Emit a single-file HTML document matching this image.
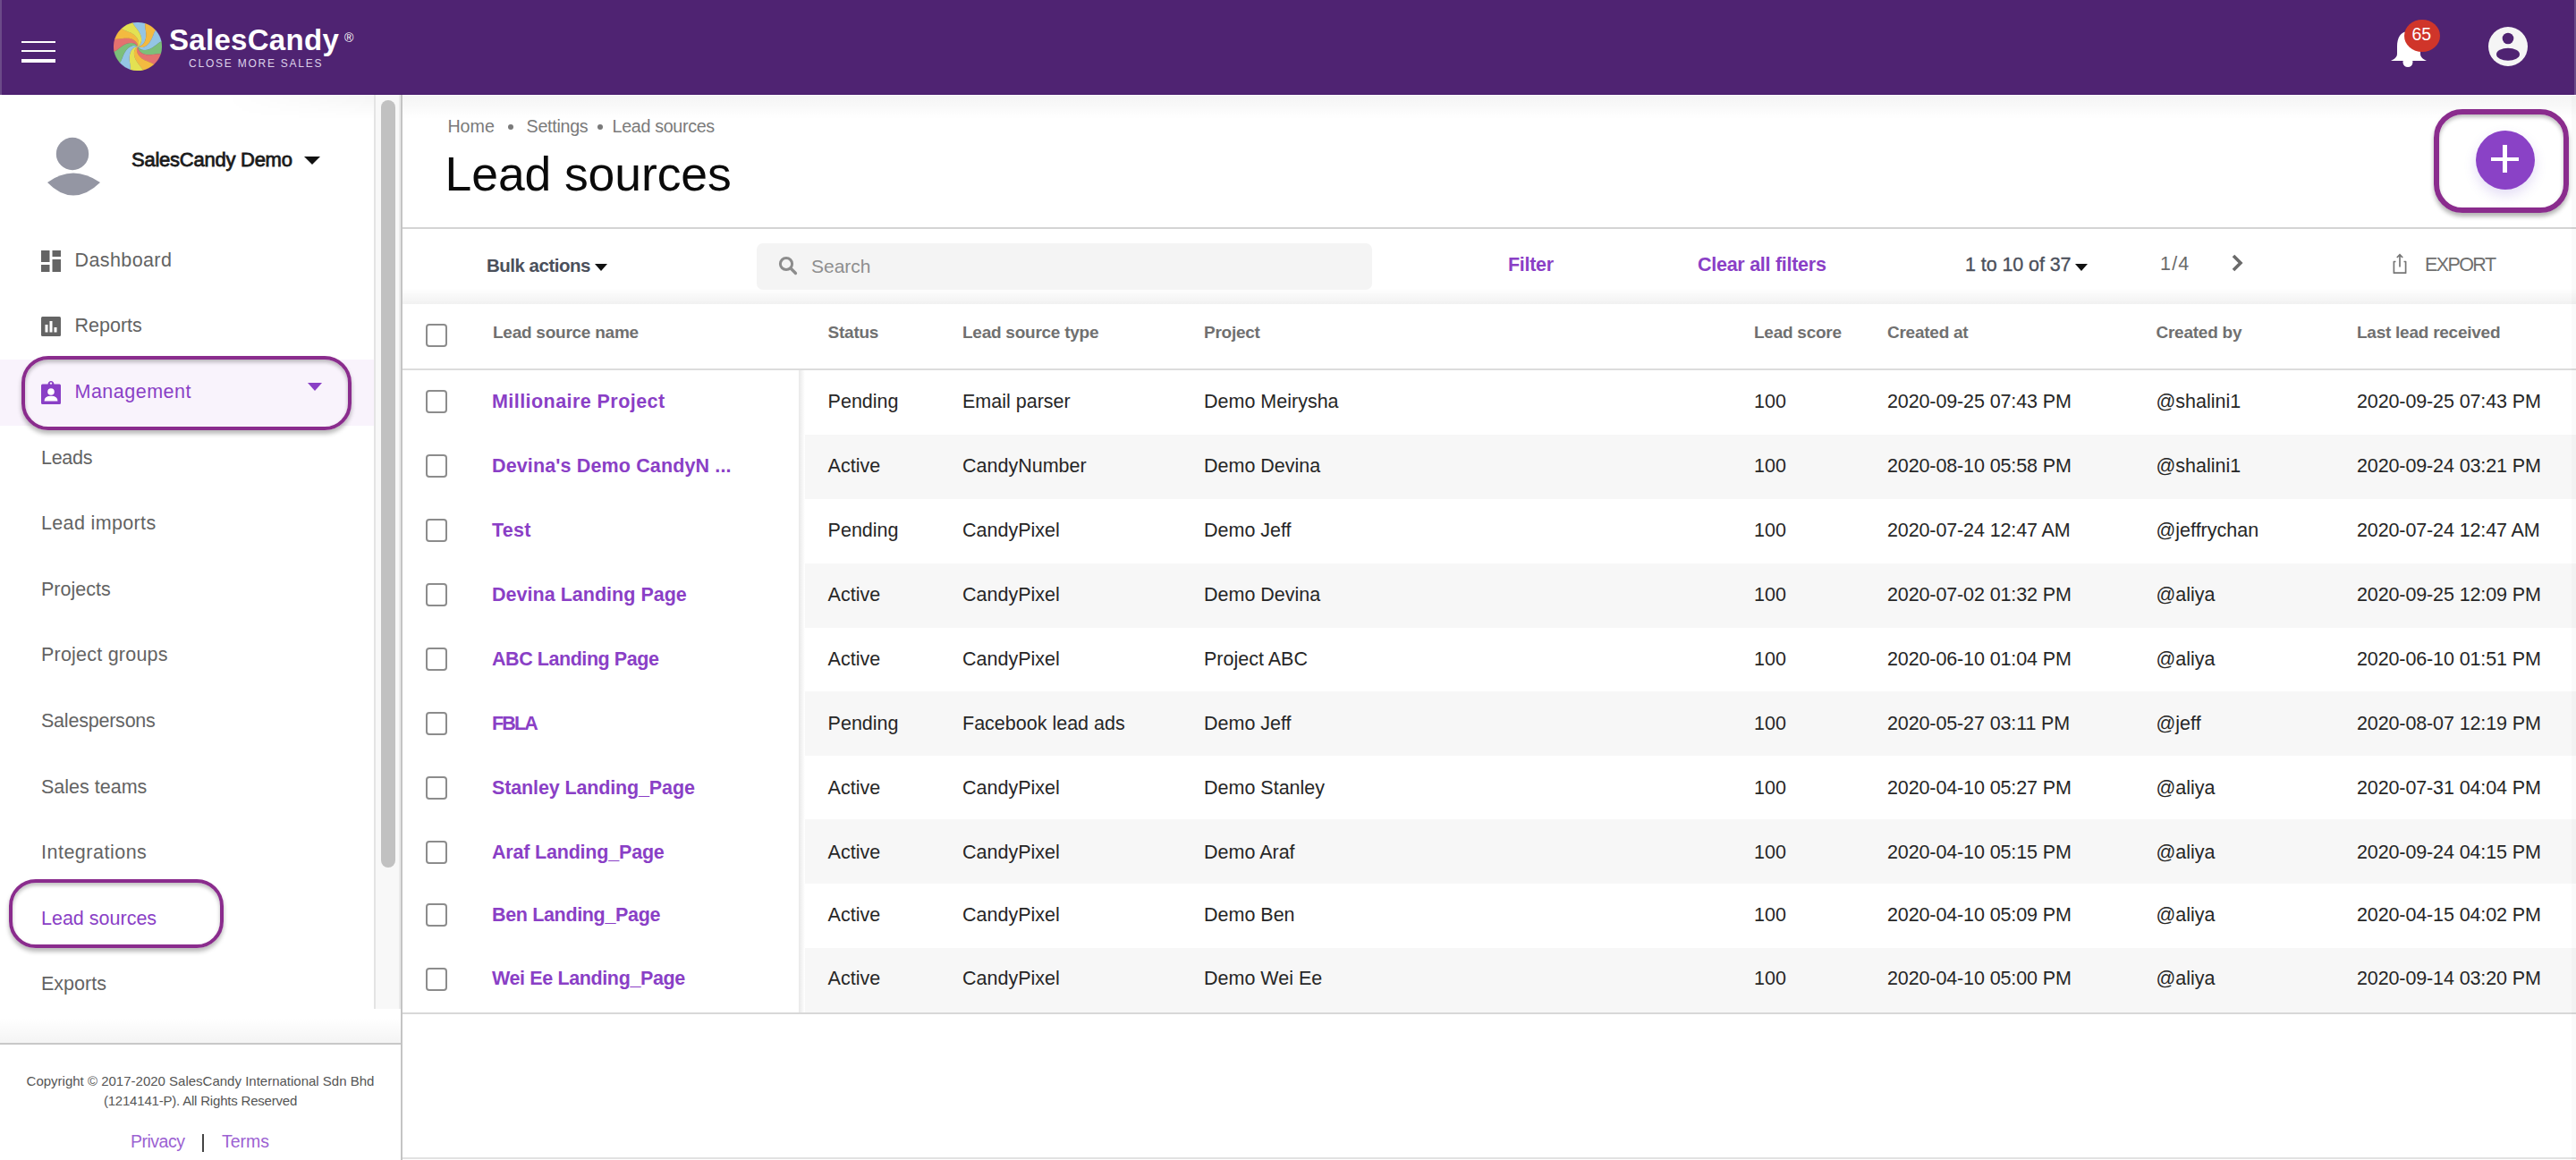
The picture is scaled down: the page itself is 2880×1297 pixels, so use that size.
<!DOCTYPE html>
<html><head><meta charset="utf-8"><style>
html,body{margin:0;padding:0;}
body{width:2880px;height:1297px;position:relative;overflow:hidden;background:#fff;font-family:"Liberation Sans", sans-serif;}
.t{position:absolute;white-space:nowrap;line-height:1;}
</style></head><body>
<div style="position:absolute;left:0;top:0;width:2880px;height:106px;background:#4F2372"></div>
<div style="position:absolute;left:0;top:105px;width:2880px;height:1px;background:#45176A"></div>
<div style="position:absolute;left:0;top:0;width:2px;height:106px;background:#6B4A88"></div>
<div style="position:absolute;left:2878px;top:0;width:2px;height:106px;background:#6B4A88"></div>
<div style="position:absolute;left:450px;top:107px;width:2430px;height:26px;background:linear-gradient(to bottom,rgba(0,0,0,0.045),rgba(0,0,0,0))"></div>
<div style="position:absolute;left:250px;top:107px;width:168px;height:26px;background:linear-gradient(to bottom,rgba(0,0,0,0.04),rgba(0,0,0,0));-webkit-mask-image:linear-gradient(to right,transparent,#000)"></div>
<div style="position:absolute;left:24px;top:46px;width:38px;height:2px;background:#fff"></div>
<div style="position:absolute;left:24px;top:56px;width:38px;height:2px;background:#fff"></div>
<div style="position:absolute;left:24px;top:66px;width:38px;height:4px;background:#fff"></div>
<svg style="position:absolute;left:126.80000000000001px;top:25px" width="54" height="54" viewBox="-27 -27 54 54"><path d="M0.00,-0.00 L1.57,-1.12 L2.80,-2.65 L3.64,-4.50 L4.06,-6.56 L4.07,-8.74 L3.70,-10.96 L2.98,-13.17 L1.97,-15.30 L0.74,-17.34 L-0.64,-19.28 L-2.08,-21.11 L-3.49,-22.88 L-4.74,-24.62 L-5.61,-26.41 A27,27 0 0 1 8.34,-25.68 L8.20,-23.69 L8.42,-21.56 L8.76,-19.32 L9.09,-17.01 L9.31,-14.65 L9.36,-12.27 L9.16,-9.91 L8.68,-7.65 L7.90,-5.53 L6.80,-3.65 L5.40,-2.07 L3.75,-0.89 L1.92,-0.18 L0.00,0.00 Z" fill="#94C5E5" stroke="#94C5E5" stroke-width="0.3"/><path d="M0.00,0.00 L1.92,-0.18 L3.75,-0.89 L5.40,-2.07 L6.80,-3.65 L7.90,-5.53 L8.68,-7.65 L9.16,-9.91 L9.36,-12.27 L9.31,-14.65 L9.09,-17.01 L8.76,-19.32 L8.42,-21.56 L8.20,-23.69 L8.34,-25.68 A27,27 0 0 1 20.06,-18.07 L18.95,-16.42 L18.07,-14.46 L17.24,-12.36 L16.37,-10.19 L15.39,-8.03 L14.24,-5.95 L12.89,-4.01 L11.34,-2.28 L9.61,-0.84 L7.71,0.24 L5.71,0.90 L3.70,1.10 L1.75,0.80 L0.00,0.00 Z" fill="#F3BA40" stroke="#F3BA40" stroke-width="0.3"/><path d="M0.00,0.00 L1.75,0.80 L3.70,1.10 L5.71,0.90 L7.71,0.24 L9.61,-0.84 L11.34,-2.28 L12.89,-4.01 L14.24,-5.95 L15.39,-8.03 L16.37,-10.19 L17.24,-12.36 L18.07,-14.46 L18.95,-16.42 L20.06,-18.07 A27,27 0 0 1 26.41,-5.61 L24.62,-4.74 L22.88,-3.49 L21.11,-2.08 L19.28,-0.64 L17.34,0.74 L15.30,1.97 L13.17,2.98 L10.96,3.70 L8.74,4.07 L6.56,4.06 L4.50,3.64 L2.65,2.80 L1.12,1.57 L0.00,0.00 Z" fill="#94C5E5" stroke="#94C5E5" stroke-width="0.3"/><path d="M0.00,0.00 L1.12,1.57 L2.65,2.80 L4.50,3.64 L6.56,4.06 L8.74,4.07 L10.96,3.70 L13.17,2.98 L15.30,1.97 L17.34,0.74 L19.28,-0.64 L21.11,-2.08 L22.88,-3.49 L24.62,-4.74 L26.41,-5.61 A27,27 0 0 1 25.68,8.34 L23.69,8.20 L21.56,8.42 L19.32,8.76 L17.01,9.09 L14.65,9.31 L12.27,9.36 L9.91,9.16 L7.65,8.68 L5.53,7.90 L3.65,6.80 L2.07,5.40 L0.89,3.75 L0.18,1.92 L-0.00,0.00 Z" fill="#7CBF79" stroke="#7CBF79" stroke-width="0.3"/><path d="M-0.00,0.00 L0.18,1.92 L0.89,3.75 L2.07,5.40 L3.65,6.80 L5.53,7.90 L7.65,8.68 L9.91,9.16 L12.27,9.36 L14.65,9.31 L17.01,9.09 L19.32,8.76 L21.56,8.42 L23.69,8.20 L25.68,8.34 A27,27 0 0 1 18.07,20.06 L16.42,18.95 L14.46,18.07 L12.36,17.24 L10.19,16.37 L8.03,15.39 L5.95,14.24 L4.01,12.89 L2.28,11.34 L0.84,9.61 L-0.24,7.71 L-0.90,5.71 L-1.10,3.70 L-0.80,1.75 L-0.00,0.00 Z" fill="#E3726F" stroke="#E3726F" stroke-width="0.3"/><path d="M-0.00,0.00 L-0.80,1.75 L-1.10,3.70 L-0.90,5.71 L-0.24,7.71 L0.84,9.61 L2.28,11.34 L4.01,12.89 L5.95,14.24 L8.03,15.39 L10.19,16.37 L12.36,17.24 L14.46,18.07 L16.42,18.95 L18.07,20.06 A27,27 0 0 1 5.61,26.41 L4.74,24.62 L3.49,22.88 L2.08,21.11 L0.64,19.28 L-0.74,17.34 L-1.97,15.30 L-2.98,13.17 L-3.70,10.96 L-4.07,8.74 L-4.06,6.56 L-3.64,4.50 L-2.80,2.65 L-1.57,1.12 L-0.00,0.00 Z" fill="#F3BA40" stroke="#F3BA40" stroke-width="0.3"/><path d="M-0.00,0.00 L-1.57,1.12 L-2.80,2.65 L-3.64,4.50 L-4.06,6.56 L-4.07,8.74 L-3.70,10.96 L-2.98,13.17 L-1.97,15.30 L-0.74,17.34 L0.64,19.28 L2.08,21.11 L3.49,22.88 L4.74,24.62 L5.61,26.41 A27,27 0 0 1 -8.34,25.68 L-8.20,23.69 L-8.42,21.56 L-8.76,19.32 L-9.09,17.01 L-9.31,14.65 L-9.36,12.27 L-9.16,9.91 L-8.68,7.65 L-7.90,5.53 L-6.80,3.65 L-5.40,2.07 L-3.75,0.89 L-1.92,0.18 L-0.00,-0.00 Z" fill="#E3E152" stroke="#E3E152" stroke-width="0.3"/><path d="M-0.00,-0.00 L-1.92,0.18 L-3.75,0.89 L-5.40,2.07 L-6.80,3.65 L-7.90,5.53 L-8.68,7.65 L-9.16,9.91 L-9.36,12.27 L-9.31,14.65 L-9.09,17.01 L-8.76,19.32 L-8.42,21.56 L-8.20,23.69 L-8.34,25.68 A27,27 0 0 1 -20.06,18.07 L-18.95,16.42 L-18.07,14.46 L-17.24,12.36 L-16.37,10.19 L-15.39,8.03 L-14.24,5.95 L-12.89,4.01 L-11.34,2.28 L-9.61,0.84 L-7.71,-0.24 L-5.71,-0.90 L-3.70,-1.10 L-1.75,-0.80 L-0.00,-0.00 Z" fill="#94C5E5" stroke="#94C5E5" stroke-width="0.3"/><path d="M-0.00,-0.00 L-1.75,-0.80 L-3.70,-1.10 L-5.71,-0.90 L-7.71,-0.24 L-9.61,0.84 L-11.34,2.28 L-12.89,4.01 L-14.24,5.95 L-15.39,8.03 L-16.37,10.19 L-17.24,12.36 L-18.07,14.46 L-18.95,16.42 L-20.06,18.07 A27,27 0 0 1 -26.41,5.61 L-24.62,4.74 L-22.88,3.49 L-21.11,2.08 L-19.28,0.64 L-17.34,-0.74 L-15.30,-1.97 L-13.17,-2.98 L-10.96,-3.70 L-8.74,-4.07 L-6.56,-4.06 L-4.50,-3.64 L-2.65,-2.80 L-1.12,-1.57 L-0.00,-0.00 Z" fill="#7CBF79" stroke="#7CBF79" stroke-width="0.3"/><path d="M-0.00,-0.00 L-1.12,-1.57 L-2.65,-2.80 L-4.50,-3.64 L-6.56,-4.06 L-8.74,-4.07 L-10.96,-3.70 L-13.17,-2.98 L-15.30,-1.97 L-17.34,-0.74 L-19.28,0.64 L-21.11,2.08 L-22.88,3.49 L-24.62,4.74 L-26.41,5.61 A27,27 0 0 1 -25.68,-8.34 L-23.69,-8.20 L-21.56,-8.42 L-19.32,-8.76 L-17.01,-9.09 L-14.65,-9.31 L-12.27,-9.36 L-9.91,-9.16 L-7.65,-8.68 L-5.53,-7.90 L-3.65,-6.80 L-2.07,-5.40 L-0.89,-3.75 L-0.18,-1.92 L0.00,-0.00 Z" fill="#E3726F" stroke="#E3726F" stroke-width="0.3"/><path d="M0.00,-0.00 L-0.18,-1.92 L-0.89,-3.75 L-2.07,-5.40 L-3.65,-6.80 L-5.53,-7.90 L-7.65,-8.68 L-9.91,-9.16 L-12.27,-9.36 L-14.65,-9.31 L-17.01,-9.09 L-19.32,-8.76 L-21.56,-8.42 L-23.69,-8.20 L-25.68,-8.34 A27,27 0 0 1 -18.07,-20.06 L-16.42,-18.95 L-14.46,-18.07 L-12.36,-17.24 L-10.19,-16.37 L-8.03,-15.39 L-5.95,-14.24 L-4.01,-12.89 L-2.28,-11.34 L-0.84,-9.61 L0.24,-7.71 L0.90,-5.71 L1.10,-3.70 L0.80,-1.75 L0.00,-0.00 Z" fill="#F3BA40" stroke="#F3BA40" stroke-width="0.3"/><path d="M0.00,-0.00 L0.80,-1.75 L1.10,-3.70 L0.90,-5.71 L0.24,-7.71 L-0.84,-9.61 L-2.28,-11.34 L-4.01,-12.89 L-5.95,-14.24 L-8.03,-15.39 L-10.19,-16.37 L-12.36,-17.24 L-14.46,-18.07 L-16.42,-18.95 L-18.07,-20.06 A27,27 0 0 1 -5.61,-26.41 L-4.74,-24.62 L-3.49,-22.88 L-2.08,-21.11 L-0.64,-19.28 L0.74,-17.34 L1.97,-15.30 L2.98,-13.17 L3.70,-10.96 L4.07,-8.74 L4.06,-6.56 L3.64,-4.50 L2.80,-2.65 L1.57,-1.12 L0.00,-0.00 Z" fill="#E3E152" stroke="#E3E152" stroke-width="0.3"/></svg>
<div class="t " style="left:189px;top:27.95px;font-size:33px;color:#fff;font-weight:bold;letter-spacing:0.3px;">SalesCandy</div>
<div class="t " style="left:385px;top:34.60px;font-size:14px;color:#fff;font-weight:normal;letter-spacing:0px;">&#174;</div>
<div class="t " style="left:211px;top:64.80px;font-size:12px;color:#DDD2EA;font-weight:normal;letter-spacing:1.77px;">CLOSE MORE SALES</div>
<svg style="position:absolute;left:2670px;top:30px" width="46" height="48" viewBox="0 0 46 48">
<path d="M23 5 C14 5 10 12 10 22 L10 30 C10 34 7 36 3 38 L43 38 C39 36 36 34 36 30 L36 22 C36 12 32 5 23 5 Z" fill="#fff"/>
<circle cx="22" cy="39.5" r="5.5" fill="#fff"/>
</svg>
<div style="position:absolute;left:2688px;top:22px;width:40px;height:36px;border-radius:50%;background:#D0352A"></div>
<div class="t " style="left:2696.5px;top:29.43px;font-size:19.5px;color:#fff;font-weight:normal;letter-spacing:0px;">65</div>
<svg style="position:absolute;left:2782px;top:30px" width="44" height="44" viewBox="0 0 44 44">
<circle cx="22" cy="22" r="22" fill="#F5F5F5"/>
<circle cx="22" cy="13" r="6.3" fill="#4F2372"/>
<ellipse cx="22" cy="30.8" rx="13" ry="7" fill="#4F2372"/>
</svg>
<div style="position:absolute;left:0;top:402px;width:418px;height:74px;background:#F9F3FC"></div>
<div style="position:absolute;left:418px;top:106px;width:2px;height:1022px;background:#E4E4E4"></div>
<div style="position:absolute;left:420px;top:106px;width:26px;height:1022px;background:#F8F8F8"></div>
<div style="position:absolute;left:446px;top:106px;width:2px;height:1022px;background:#EAEAEA"></div>
<div style="position:absolute;left:426px;top:112px;width:16px;height:858px;background:#C1C1C1;border-radius:8px"></div>
<div style="position:absolute;left:448px;top:106px;width:2px;height:1191px;background:#C4C4C4"></div>
<svg style="position:absolute;left:52px;top:153px" width="62" height="67" viewBox="0 0 62 67">
<circle cx="29" cy="19" r="18.2" fill="#9496A3"/>
<path d="M1 51 Q29.5 30 60 51 Q45 65.5 30 65.5 Q15 65.5 1 51 Z" fill="#9496A3"/>
</svg>
<div class="t " style="left:147px;top:167.80px;font-size:22px;color:#1B1B1B;font-weight:normal;letter-spacing:-0.25px;-webkit-text-stroke:0.8px #1B1B1B;">SalesCandy Demo</div>
<div style="position:absolute;left:340px;top:175px;width:0;height:0;border-left:9.5px solid transparent;border-right:9.5px solid transparent;border-top:9.5px solid #111"></div>
<svg style="position:absolute;left:46px;top:280px" width="22" height="24" viewBox="0 0 22 24" fill="#646464">
<rect x="0" y="0" width="9.5" height="13"/><rect x="12.5" y="0" width="9.5" height="7"/><rect x="0" y="16" width="9.5" height="8"/><rect x="12.5" y="10" width="9.5" height="14"/></svg>
<svg style="position:absolute;left:46px;top:354px" width="22" height="22" viewBox="0 0 22 22">
<rect width="22" height="22" rx="1.5" fill="#646464"/><rect x="4.5" y="9" width="3" height="8.5" fill="#fff"/><rect x="9.5" y="5" width="3" height="12.5" fill="#fff"/><rect x="14.5" y="12" width="3" height="5.5" fill="#fff"/></svg>
<svg style="position:absolute;left:46px;top:426px" width="22" height="26" viewBox="0 0 22 26">
<path d="M1.5 3.5 H7.5 Q8 0 11 0 Q14 0 14.5 3.5 H20.5 Q22 3.5 22 5 V24.5 Q22 26 20.5 26 H1.5 Q0 26 0 24.5 V5 Q0 3.5 1.5 3.5 Z" fill="#8A3FC6"/>
<circle cx="11" cy="2.6" r="1.2" fill="#F8F3FB"/>
<circle cx="11" cy="12" r="3.8" fill="#fff"/>
<path d="M3.5 22.5 Q3.5 16.8 11 16.8 Q18.5 16.8 18.5 22.5 Z" fill="#fff"/></svg>
<div class="t nav" style="left:83.5px;top:280.83px;font-size:21.5px;color:#636363;font-weight:normal;letter-spacing:0.4px;">Dashboard</div>
<div class="t nav" style="left:83.5px;top:354.43px;font-size:21.5px;color:#636363;font-weight:normal;letter-spacing:0px;">Reports</div>
<div class="t nav" style="left:83.5px;top:428.03px;font-size:21.5px;color:#8A3FC6;font-weight:normal;letter-spacing:0.5px;">Management</div>
<div class="t nav" style="left:46px;top:501.62px;font-size:21.5px;color:#636363;font-weight:normal;letter-spacing:-0.3px;">Leads</div>
<div class="t nav" style="left:46px;top:575.23px;font-size:21.5px;color:#636363;font-weight:normal;letter-spacing:0.35px;">Lead imports</div>
<div class="t nav" style="left:46px;top:648.83px;font-size:21.5px;color:#636363;font-weight:normal;letter-spacing:0px;">Projects</div>
<div class="t nav" style="left:46px;top:722.43px;font-size:21.5px;color:#636363;font-weight:normal;letter-spacing:0.22px;">Project groups</div>
<div class="t nav" style="left:46px;top:796.02px;font-size:21.5px;color:#636363;font-weight:normal;letter-spacing:-0.22px;">Salespersons</div>
<div class="t nav" style="left:46px;top:869.62px;font-size:21.5px;color:#636363;font-weight:normal;letter-spacing:0px;">Sales teams</div>
<div class="t nav" style="left:46px;top:943.23px;font-size:21.5px;color:#636363;font-weight:normal;letter-spacing:0.5px;">Integrations</div>
<div class="t nav" style="left:46px;top:1016.82px;font-size:21.5px;color:#8A3FC6;font-weight:normal;letter-spacing:0px;">Lead sources</div>
<div class="t nav" style="left:46px;top:1090.42px;font-size:21.5px;color:#636363;font-weight:normal;letter-spacing:0px;">Exports</div>
<div style="position:absolute;left:344px;top:428px;width:0;height:0;border-left:8px solid transparent;border-right:8px solid transparent;border-top:9px solid #8A3FC6"></div>
<div style="position:absolute;left:23.5px;top:398px;width:369px;height:83px;box-sizing:border-box;border:4.8px solid #8A2C8D;border-radius:30px;box-shadow:0 4px 5px rgba(0,0,0,0.28), inset 0 3px 4px rgba(0,0,0,0.25)"></div>
<div style="position:absolute;left:9.5px;top:982.5px;width:240.5px;height:77.5px;box-sizing:border-box;border:4.5px solid #8A2C8D;border-radius:30px;box-shadow:0 4px 5px rgba(0,0,0,0.28), inset 0 3px 4px rgba(0,0,0,0.25)"></div>
<div style="position:absolute;left:0;top:1138px;width:448px;height:28px;background:linear-gradient(to bottom,rgba(0,0,0,0),rgba(0,0,0,0.045))"></div>
<div style="position:absolute;left:0;top:1165.5px;width:448px;height:2px;background:#C8C8C8"></div>
<div class="t" style="left:0;width:448px;text-align:center;top:1200.58px;font-size:15px;color:#555">Copyright &#169; 2017-2020 SalesCandy International Sdn Bhd</div>
<div class="t" style="left:0;width:448px;text-align:center;top:1222.83px;font-size:15px;letter-spacing:-0.2px;color:#555">(1214141-P). All Rights Reserved</div>
<div class="t " style="left:146px;top:1267.33px;font-size:19.5px;color:#9C62D2;font-weight:normal;letter-spacing:-0.5px;">Privacy</div>
<div style="position:absolute;left:226px;top:1268px;width:2px;height:20px;background:#444"></div>
<div class="t " style="left:248px;top:1267.33px;font-size:19.5px;color:#9C62D2;font-weight:normal;letter-spacing:0px;">Terms</div>
<div class="t " style="left:500.4px;top:131.66px;font-size:19.7px;color:#7A7A7A;font-weight:normal;letter-spacing:0px;">Home</div>
<div style="position:absolute;left:568px;top:139px;width:6px;height:6px;border-radius:50%;background:#7A7A7A"></div>
<div class="t " style="left:588.6px;top:131.66px;font-size:19.7px;color:#7A7A7A;font-weight:normal;letter-spacing:-0.3px;">Settings</div>
<div style="position:absolute;left:668px;top:139px;width:6px;height:6px;border-radius:50%;background:#7A7A7A"></div>
<div class="t " style="left:684.6px;top:131.66px;font-size:19.7px;color:#7A7A7A;font-weight:normal;letter-spacing:-0.33px;">Lead sources</div>
<div class="t " style="left:497.6px;top:168.22px;font-size:53.5px;color:#0A0A0A;font-weight:normal;letter-spacing:-0.1px;">Lead sources</div>
<div style="position:absolute;left:2721px;top:122px;width:151px;height:115.5px;box-sizing:border-box;border:6px solid #8A2C8D;border-radius:32px;box-shadow:0 4px 5px rgba(0,0,0,0.3), inset 0 3px 4px rgba(0,0,0,0.25)"></div>
<div style="position:absolute;left:2768px;top:146px;width:66px;height:66px;border-radius:50%;background:#8A42C6;box-shadow:0 6px 14px rgba(100,60,200,0.18)"></div>
<div style="position:absolute;left:2785px;top:175.5px;width:31px;height:4.7px;background:#fff"></div>
<div style="position:absolute;left:2798.3px;top:161.5px;width:4.7px;height:31.5px;background:#fff"></div>
<div style="position:absolute;left:450px;top:253.5px;width:2430px;height:2px;background:#D4D4D4"></div>
<div style="position:absolute;left:450px;top:322px;width:2430px;height:18px;background:linear-gradient(to bottom,rgba(0,0,0,0),rgba(0,0,0,0.055))"></div>
<div class="t " style="left:544px;top:286.88px;font-size:20.5px;color:#4B505B;font-weight:bold;letter-spacing:-0.5px;">Bulk actions</div>
<div style="position:absolute;left:664.5px;top:295px;width:0;height:0;border-left:7.2px solid transparent;border-right:7.2px solid transparent;border-top:8.5px solid #111"></div>
<div style="position:absolute;left:846px;top:272px;width:688px;height:52px;border-radius:7px;background:#F4F4F4"></div>
<svg style="position:absolute;left:869px;top:285px" width="24" height="24" viewBox="0 0 24 24">
<circle cx="10" cy="10" r="6.6" fill="none" stroke="#8C8C8C" stroke-width="3"/>
<path d="M15 15 L20.5 20.5" stroke="#8C8C8C" stroke-width="3.2" stroke-linecap="round"/></svg>
<div class="t " style="left:907px;top:286.65px;font-size:21px;color:#8E8E8E;font-weight:normal;letter-spacing:0px;">Search</div>
<div class="t " style="left:1686px;top:286.03px;font-size:21.5px;color:#8A3FC6;font-weight:bold;letter-spacing:-0.3px;">Filter</div>
<div class="t " style="left:1898px;top:286.03px;font-size:21.5px;color:#8A3FC6;font-weight:bold;letter-spacing:-0.27px;">Clear all filters</div>
<div class="t " style="left:2197px;top:286.03px;font-size:21.5px;color:#4B505B;font-weight:normal;letter-spacing:-0.08px;-webkit-text-stroke:0.35px #4B505B;">1 to 10 of 37</div>
<div style="position:absolute;left:2320px;top:295px;width:0;height:0;border-left:7.5px solid transparent;border-right:7.5px solid transparent;border-top:8.5px solid #111"></div>
<div class="t " style="left:2415px;top:284.62px;font-size:21.5px;color:#6A6A6A;font-weight:normal;letter-spacing:1.2px;">1/4</div>
<svg style="position:absolute;left:2492px;top:282px" width="20" height="24" viewBox="0 0 20 24">
<path d="M5 4 L13 12 L5 20" fill="none" stroke="#6A6A6A" stroke-width="3.6"/></svg>
<svg style="position:absolute;left:2670px;top:282px" width="24" height="26" viewBox="0 0 24 26">
<path d="M8.5 10.5 H6.4 V23.2 H19.6 V10.5 H17.5" fill="none" stroke="#767676" stroke-width="1.7" stroke-linejoin="round"/>
<path d="M13 2.8 V16.5 M9.8 6 L13 2.8 L16.2 6" fill="none" stroke="#767676" stroke-width="1.7"/></svg>
<div class="t " style="left:2711px;top:286.03px;font-size:21.5px;color:#707070;font-weight:normal;letter-spacing:-1.6px;">EXPORT</div>
<div style="position:absolute;left:476px;top:362px;width:24px;height:26px;box-sizing:border-box;border:2px solid #8C8C8C;border-radius:4px;background:#fff"></div>
<div class="t " style="left:551px;top:362.35px;font-size:19px;color:#707070;font-weight:bold;letter-spacing:-0.25px;">Lead source name</div>
<div class="t " style="left:925.6px;top:362.35px;font-size:19px;color:#707070;font-weight:bold;letter-spacing:-0.25px;">Status</div>
<div class="t " style="left:1076px;top:362.35px;font-size:19px;color:#707070;font-weight:bold;letter-spacing:-0.25px;">Lead source type</div>
<div class="t " style="left:1346px;top:362.35px;font-size:19px;color:#707070;font-weight:bold;letter-spacing:-0.25px;">Project</div>
<div class="t " style="left:1961px;top:362.35px;font-size:19px;color:#707070;font-weight:bold;letter-spacing:-0.25px;">Lead score</div>
<div class="t " style="left:2110px;top:362.35px;font-size:19px;color:#707070;font-weight:bold;letter-spacing:-0.25px;">Created at</div>
<div class="t " style="left:2410.5px;top:362.35px;font-size:19px;color:#707070;font-weight:bold;letter-spacing:-0.25px;">Created by</div>
<div class="t " style="left:2635px;top:362.35px;font-size:19px;color:#707070;font-weight:bold;letter-spacing:-0.25px;">Last lead received</div>
<div style="position:absolute;left:450px;top:412px;width:2430px;height:2px;background:#DCDCDC"></div>
<div style="position:absolute;left:900px;top:486px;width:1980px;height:72px;background:#F7F7F7"></div>
<div style="position:absolute;left:900px;top:630px;width:1980px;height:71.5px;background:#F7F7F7"></div>
<div style="position:absolute;left:900px;top:772.5px;width:1980px;height:72.0px;background:#F7F7F7"></div>
<div style="position:absolute;left:900px;top:916px;width:1980px;height:72px;background:#F7F7F7"></div>
<div style="position:absolute;left:900px;top:1060px;width:1980px;height:72px;background:#F7F7F7"></div>
<div style="position:absolute;left:476px;top:436px;width:24px;height:26px;box-sizing:border-box;border:2px solid #8C8C8C;border-radius:4px;background:#fff"></div>
<div class="t " style="left:550px;top:439.23px;font-size:21.5px;color:#8A3FC6;font-weight:bold;letter-spacing:0.439px;">Millionaire Project</div>
<div class="t " style="left:925.6px;top:439.23px;font-size:21.5px;color:#262626;font-weight:normal;letter-spacing:0px;">Pending</div>
<div class="t " style="left:1076px;top:439.23px;font-size:21.5px;color:#262626;font-weight:normal;letter-spacing:0px;">Email parser</div>
<div class="t " style="left:1346px;top:439.23px;font-size:21.5px;color:#262626;font-weight:normal;letter-spacing:0px;">Demo Meirysha</div>
<div class="t " style="left:1961px;top:439.23px;font-size:21.5px;color:#262626;font-weight:normal;letter-spacing:0px;">100</div>
<div class="t " style="left:2110px;top:439.23px;font-size:21.5px;color:#262626;font-weight:normal;letter-spacing:-0.12px;">2020-09-25 07:43 PM</div>
<div class="t " style="left:2410.5px;top:439.23px;font-size:21.5px;color:#262626;font-weight:normal;letter-spacing:0px;">@shalini1</div>
<div class="t " style="left:2635px;top:439.23px;font-size:21.5px;color:#262626;font-weight:normal;letter-spacing:-0.12px;">2020-09-25 07:43 PM</div>
<div style="position:absolute;left:476px;top:508px;width:24px;height:26px;box-sizing:border-box;border:2px solid #8C8C8C;border-radius:4px;background:#fff"></div>
<div class="t " style="left:550px;top:511.33px;font-size:21.5px;color:#8A3FC6;font-weight:bold;letter-spacing:0.137px;">Devina's Demo CandyN ...</div>
<div class="t " style="left:925.6px;top:511.33px;font-size:21.5px;color:#262626;font-weight:normal;letter-spacing:0px;">Active</div>
<div class="t " style="left:1076px;top:511.33px;font-size:21.5px;color:#262626;font-weight:normal;letter-spacing:0px;">CandyNumber</div>
<div class="t " style="left:1346px;top:511.33px;font-size:21.5px;color:#262626;font-weight:normal;letter-spacing:0px;">Demo Devina</div>
<div class="t " style="left:1961px;top:511.33px;font-size:21.5px;color:#262626;font-weight:normal;letter-spacing:0px;">100</div>
<div class="t " style="left:2110px;top:511.33px;font-size:21.5px;color:#262626;font-weight:normal;letter-spacing:-0.12px;">2020-08-10 05:58 PM</div>
<div class="t " style="left:2410.5px;top:511.33px;font-size:21.5px;color:#262626;font-weight:normal;letter-spacing:0px;">@shalini1</div>
<div class="t " style="left:2635px;top:511.33px;font-size:21.5px;color:#262626;font-weight:normal;letter-spacing:-0.12px;">2020-09-24 03:21 PM</div>
<div style="position:absolute;left:476px;top:580px;width:24px;height:26px;box-sizing:border-box;border:2px solid #8C8C8C;border-radius:4px;background:#fff"></div>
<div class="t " style="left:550px;top:582.93px;font-size:21.5px;color:#8A3FC6;font-weight:bold;letter-spacing:0.25px;">Test</div>
<div class="t " style="left:925.6px;top:582.93px;font-size:21.5px;color:#262626;font-weight:normal;letter-spacing:0px;">Pending</div>
<div class="t " style="left:1076px;top:582.93px;font-size:21.5px;color:#262626;font-weight:normal;letter-spacing:0px;">CandyPixel</div>
<div class="t " style="left:1346px;top:582.93px;font-size:21.5px;color:#262626;font-weight:normal;letter-spacing:0px;">Demo Jeff</div>
<div class="t " style="left:1961px;top:582.93px;font-size:21.5px;color:#262626;font-weight:normal;letter-spacing:0px;">100</div>
<div class="t " style="left:2110px;top:582.93px;font-size:21.5px;color:#262626;font-weight:normal;letter-spacing:-0.12px;">2020-07-24 12:47 AM</div>
<div class="t " style="left:2410.5px;top:582.93px;font-size:21.5px;color:#262626;font-weight:normal;letter-spacing:0px;">@jeffrychan</div>
<div class="t " style="left:2635px;top:582.93px;font-size:21.5px;color:#262626;font-weight:normal;letter-spacing:-0.12px;">2020-07-24 12:47 AM</div>
<div style="position:absolute;left:476px;top:652px;width:24px;height:26px;box-sizing:border-box;border:2px solid #8C8C8C;border-radius:4px;background:#fff"></div>
<div class="t " style="left:550px;top:654.93px;font-size:21.5px;color:#8A3FC6;font-weight:bold;letter-spacing:0.022px;">Devina Landing Page</div>
<div class="t " style="left:925.6px;top:654.93px;font-size:21.5px;color:#262626;font-weight:normal;letter-spacing:0px;">Active</div>
<div class="t " style="left:1076px;top:654.93px;font-size:21.5px;color:#262626;font-weight:normal;letter-spacing:0px;">CandyPixel</div>
<div class="t " style="left:1346px;top:654.93px;font-size:21.5px;color:#262626;font-weight:normal;letter-spacing:0px;">Demo Devina</div>
<div class="t " style="left:1961px;top:654.93px;font-size:21.5px;color:#262626;font-weight:normal;letter-spacing:0px;">100</div>
<div class="t " style="left:2110px;top:654.93px;font-size:21.5px;color:#262626;font-weight:normal;letter-spacing:-0.12px;">2020-07-02 01:32 PM</div>
<div class="t " style="left:2410.5px;top:654.93px;font-size:21.5px;color:#262626;font-weight:normal;letter-spacing:0px;">@aliya</div>
<div class="t " style="left:2635px;top:654.93px;font-size:21.5px;color:#262626;font-weight:normal;letter-spacing:-0.12px;">2020-09-25 12:09 PM</div>
<div style="position:absolute;left:476px;top:724px;width:24px;height:26px;box-sizing:border-box;border:2px solid #8C8C8C;border-radius:4px;background:#fff"></div>
<div class="t " style="left:550px;top:727.03px;font-size:21.5px;color:#8A3FC6;font-weight:bold;letter-spacing:-0.443px;">ABC Landing Page</div>
<div class="t " style="left:925.6px;top:727.03px;font-size:21.5px;color:#262626;font-weight:normal;letter-spacing:0px;">Active</div>
<div class="t " style="left:1076px;top:727.03px;font-size:21.5px;color:#262626;font-weight:normal;letter-spacing:0px;">CandyPixel</div>
<div class="t " style="left:1346px;top:727.03px;font-size:21.5px;color:#262626;font-weight:normal;letter-spacing:0px;">Project ABC</div>
<div class="t " style="left:1961px;top:727.03px;font-size:21.5px;color:#262626;font-weight:normal;letter-spacing:0px;">100</div>
<div class="t " style="left:2110px;top:727.03px;font-size:21.5px;color:#262626;font-weight:normal;letter-spacing:-0.12px;">2020-06-10 01:04 PM</div>
<div class="t " style="left:2410.5px;top:727.03px;font-size:21.5px;color:#262626;font-weight:normal;letter-spacing:0px;">@aliya</div>
<div class="t " style="left:2635px;top:727.03px;font-size:21.5px;color:#262626;font-weight:normal;letter-spacing:-0.12px;">2020-06-10 01:51 PM</div>
<div style="position:absolute;left:476px;top:796px;width:24px;height:26px;box-sizing:border-box;border:2px solid #8C8C8C;border-radius:4px;background:#fff"></div>
<div class="t " style="left:550px;top:798.93px;font-size:21.5px;color:#8A3FC6;font-weight:bold;letter-spacing:-1.85px;">FBLA</div>
<div class="t " style="left:925.6px;top:798.93px;font-size:21.5px;color:#262626;font-weight:normal;letter-spacing:0px;">Pending</div>
<div class="t " style="left:1076px;top:798.93px;font-size:21.5px;color:#262626;font-weight:normal;letter-spacing:0px;">Facebook lead ads</div>
<div class="t " style="left:1346px;top:798.93px;font-size:21.5px;color:#262626;font-weight:normal;letter-spacing:0px;">Demo Jeff</div>
<div class="t " style="left:1961px;top:798.93px;font-size:21.5px;color:#262626;font-weight:normal;letter-spacing:0px;">100</div>
<div class="t " style="left:2110px;top:798.93px;font-size:21.5px;color:#262626;font-weight:normal;letter-spacing:-0.12px;">2020-05-27 03:11 PM</div>
<div class="t " style="left:2410.5px;top:798.93px;font-size:21.5px;color:#262626;font-weight:normal;letter-spacing:0px;">@jeff</div>
<div class="t " style="left:2635px;top:798.93px;font-size:21.5px;color:#262626;font-weight:normal;letter-spacing:-0.12px;">2020-08-07 12:19 PM</div>
<div style="position:absolute;left:476px;top:868px;width:24px;height:26px;box-sizing:border-box;border:2px solid #8C8C8C;border-radius:4px;background:#fff"></div>
<div class="t " style="left:550px;top:870.93px;font-size:21.5px;color:#8A3FC6;font-weight:bold;letter-spacing:-0.134px;">Stanley Landing_Page</div>
<div class="t " style="left:925.6px;top:870.93px;font-size:21.5px;color:#262626;font-weight:normal;letter-spacing:0px;">Active</div>
<div class="t " style="left:1076px;top:870.93px;font-size:21.5px;color:#262626;font-weight:normal;letter-spacing:0px;">CandyPixel</div>
<div class="t " style="left:1346px;top:870.93px;font-size:21.5px;color:#262626;font-weight:normal;letter-spacing:0px;">Demo Stanley</div>
<div class="t " style="left:1961px;top:870.93px;font-size:21.5px;color:#262626;font-weight:normal;letter-spacing:0px;">100</div>
<div class="t " style="left:2110px;top:870.93px;font-size:21.5px;color:#262626;font-weight:normal;letter-spacing:-0.12px;">2020-04-10 05:27 PM</div>
<div class="t " style="left:2410.5px;top:870.93px;font-size:21.5px;color:#262626;font-weight:normal;letter-spacing:0px;">@aliya</div>
<div class="t " style="left:2635px;top:870.93px;font-size:21.5px;color:#262626;font-weight:normal;letter-spacing:-0.12px;">2020-07-31 04:04 PM</div>
<div style="position:absolute;left:476px;top:940px;width:24px;height:26px;box-sizing:border-box;border:2px solid #8C8C8C;border-radius:4px;background:#fff"></div>
<div class="t " style="left:550px;top:942.53px;font-size:21.5px;color:#8A3FC6;font-weight:bold;letter-spacing:-0.194px;">Araf Landing_Page</div>
<div class="t " style="left:925.6px;top:942.53px;font-size:21.5px;color:#262626;font-weight:normal;letter-spacing:0px;">Active</div>
<div class="t " style="left:1076px;top:942.53px;font-size:21.5px;color:#262626;font-weight:normal;letter-spacing:0px;">CandyPixel</div>
<div class="t " style="left:1346px;top:942.53px;font-size:21.5px;color:#262626;font-weight:normal;letter-spacing:0px;">Demo Araf</div>
<div class="t " style="left:1961px;top:942.53px;font-size:21.5px;color:#262626;font-weight:normal;letter-spacing:0px;">100</div>
<div class="t " style="left:2110px;top:942.53px;font-size:21.5px;color:#262626;font-weight:normal;letter-spacing:-0.12px;">2020-04-10 05:15 PM</div>
<div class="t " style="left:2410.5px;top:942.53px;font-size:21.5px;color:#262626;font-weight:normal;letter-spacing:0px;">@aliya</div>
<div class="t " style="left:2635px;top:942.53px;font-size:21.5px;color:#262626;font-weight:normal;letter-spacing:-0.12px;">2020-09-24 04:15 PM</div>
<div style="position:absolute;left:476px;top:1010px;width:24px;height:26px;box-sizing:border-box;border:2px solid #8C8C8C;border-radius:4px;background:#fff"></div>
<div class="t " style="left:550px;top:1013.43px;font-size:21.5px;color:#8A3FC6;font-weight:bold;letter-spacing:-0.343px;">Ben Landing_Page</div>
<div class="t " style="left:925.6px;top:1013.43px;font-size:21.5px;color:#262626;font-weight:normal;letter-spacing:0px;">Active</div>
<div class="t " style="left:1076px;top:1013.43px;font-size:21.5px;color:#262626;font-weight:normal;letter-spacing:0px;">CandyPixel</div>
<div class="t " style="left:1346px;top:1013.43px;font-size:21.5px;color:#262626;font-weight:normal;letter-spacing:0px;">Demo Ben</div>
<div class="t " style="left:1961px;top:1013.43px;font-size:21.5px;color:#262626;font-weight:normal;letter-spacing:0px;">100</div>
<div class="t " style="left:2110px;top:1013.43px;font-size:21.5px;color:#262626;font-weight:normal;letter-spacing:-0.12px;">2020-04-10 05:09 PM</div>
<div class="t " style="left:2410.5px;top:1013.43px;font-size:21.5px;color:#262626;font-weight:normal;letter-spacing:0px;">@aliya</div>
<div class="t " style="left:2635px;top:1013.43px;font-size:21.5px;color:#262626;font-weight:normal;letter-spacing:-0.12px;">2020-04-15 04:02 PM</div>
<div style="position:absolute;left:476px;top:1082px;width:24px;height:26px;box-sizing:border-box;border:2px solid #8C8C8C;border-radius:4px;background:#fff"></div>
<div class="t " style="left:550px;top:1084.42px;font-size:21.5px;color:#8A3FC6;font-weight:bold;letter-spacing:-0.378px;">Wei Ee Landing_Page</div>
<div class="t " style="left:925.6px;top:1084.42px;font-size:21.5px;color:#262626;font-weight:normal;letter-spacing:0px;">Active</div>
<div class="t " style="left:1076px;top:1084.42px;font-size:21.5px;color:#262626;font-weight:normal;letter-spacing:0px;">CandyPixel</div>
<div class="t " style="left:1346px;top:1084.42px;font-size:21.5px;color:#262626;font-weight:normal;letter-spacing:0px;">Demo Wei Ee</div>
<div class="t " style="left:1961px;top:1084.42px;font-size:21.5px;color:#262626;font-weight:normal;letter-spacing:0px;">100</div>
<div class="t " style="left:2110px;top:1084.42px;font-size:21.5px;color:#262626;font-weight:normal;letter-spacing:-0.12px;">2020-04-10 05:00 PM</div>
<div class="t " style="left:2410.5px;top:1084.42px;font-size:21.5px;color:#262626;font-weight:normal;letter-spacing:0px;">@aliya</div>
<div class="t " style="left:2635px;top:1084.42px;font-size:21.5px;color:#262626;font-weight:normal;letter-spacing:-0.12px;">2020-09-14 03:20 PM</div>
<div style="position:absolute;left:893px;top:414px;width:7px;height:719px;background:linear-gradient(to right,rgba(0,0,0,0.09),rgba(0,0,0,0))"></div>
<div style="position:absolute;left:450px;top:1132px;width:2430px;height:2px;background:#D8D8D8"></div>
<div style="position:absolute;left:450px;top:1293.5px;width:2430px;height:2px;background:#E2E2E2"></div>
<div style="position:absolute;left:2875px;top:107px;width:5px;height:1190px;background:rgba(0,0,0,0.02)"></div>
</body></html>
